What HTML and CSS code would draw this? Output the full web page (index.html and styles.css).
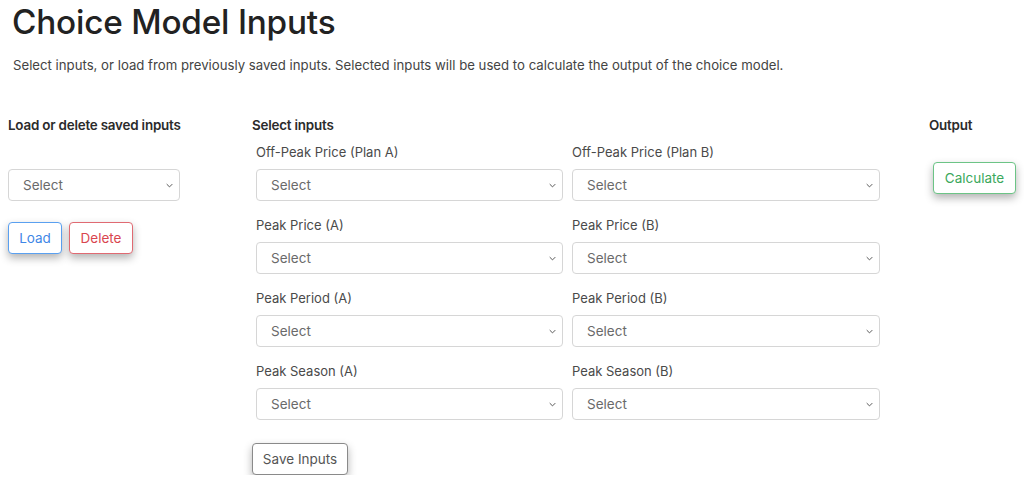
FILE: index.html
```html
<!DOCTYPE html>
<html>
<head>
<meta charset="utf-8">
<link rel="stylesheet" href="styles.css">
</head>
<body>
<h1 class="title">Choice Model Inputs</h1>
<p class="lead">Select inputs, or load from previously saved inputs. Selected inputs will be used to calculate the output of the choice model.</p>
<div class="layout">
  <section class="col-left">
    <h2 class="heading">Load or delete saved inputs</h2>
    <div class="select left-select"><span>Select</span><svg class="chev" viewBox="0 0 10 6"><path d="M1 1l4 4 4-4"/></svg></div>
    <div class="btn-row">
      <button class="btn btn-blue">Load</button>
      <button class="btn btn-red">Delete</button>
    </div>
  </section>
  <section class="col-mid">
    <h2 class="heading">Select inputs</h2>
    <div class="grid">
      <div class="field"><label>Off-Peak Price (Plan A)</label><div class="select"><span>Select</span><svg class="chev" viewBox="0 0 10 6"><path d="M1 1l4 4 4-4"/></svg></div></div>
      <div class="field"><label>Off-Peak Price (Plan B)</label><div class="select"><span>Select</span><svg class="chev" viewBox="0 0 10 6"><path d="M1 1l4 4 4-4"/></svg></div></div>
      <div class="field"><label>Peak Price (A)</label><div class="select"><span>Select</span><svg class="chev" viewBox="0 0 10 6"><path d="M1 1l4 4 4-4"/></svg></div></div>
      <div class="field"><label>Peak Price (B)</label><div class="select"><span>Select</span><svg class="chev" viewBox="0 0 10 6"><path d="M1 1l4 4 4-4"/></svg></div></div>
      <div class="field"><label>Peak Period (A)</label><div class="select"><span>Select</span><svg class="chev" viewBox="0 0 10 6"><path d="M1 1l4 4 4-4"/></svg></div></div>
      <div class="field"><label>Peak Period (B)</label><div class="select"><span>Select</span><svg class="chev" viewBox="0 0 10 6"><path d="M1 1l4 4 4-4"/></svg></div></div>
      <div class="field"><label>Peak Season (A)</label><div class="select"><span>Select</span><svg class="chev" viewBox="0 0 10 6"><path d="M1 1l4 4 4-4"/></svg></div></div>
      <div class="field"><label>Peak Season (B)</label><div class="select"><span>Select</span><svg class="chev" viewBox="0 0 10 6"><path d="M1 1l4 4 4-4"/></svg></div></div>
    </div>
    <button class="btn btn-grey save">Save Inputs</button>
  </section>
  <section class="col-right">
    <h2 class="heading">Output</h2>
    <button class="btn btn-green calc">Calculate</button>
  </section>
</div>
</body>
</html>
```
FILE: styles.css
```css
* { box-sizing: border-box; }
body {
  margin: 0;
  font-family: Inter, "Open Sans", sans-serif;
  color: #333;
  background: #fff;
}
.title {
  margin: 0;
  padding: 2px 0 0 12px;
  font-size: 33.3px;
  font-weight: 500;
  line-height: 40px;
  color: #222;
  letter-spacing: -0.2px;
}
.lead {
  margin: 14px 0 0 13px;
  font-size: 13.2px;
  line-height: 18px;
  color: #444;
}
.layout {
  display: flex;
  margin-top: 42px;
}
.heading {
  margin: 0;
  font-size: 13.4px;
  font-weight: 600;
  line-height: 18px;
  color: #2b2b2b;
  letter-spacing: -0.2px;
}
.col-left {
  width: 244px;
  padding-left: 8px;
}
.left-select {
  width: 172px;
  margin-top: 35px;
}
.btn-row {
  display: flex;
  gap: 7px;
  margin-top: 21px;
}
.col-mid {
  width: 685px;
  padding-left: 8px;
}
.grid {
  display: grid;
  grid-template-columns: 307px 308px;
  column-gap: 9px;
  row-gap: 15px;
  margin-left: 4px;
  margin-top: 9px;
}
.field label {
  display: block;
  font-size: 13px;
  line-height: 18px;
  color: #4a4a4a;
  margin-bottom: 8px;
}
.select {
  display: flex;
  align-items: center;
  justify-content: space-between;
  height: 32px;
  border: 1px solid #d6d6d6;
  border-radius: 4px;
  padding: 0 6px 0 14px;
  font-size: 13.5px;
  color: #6a6a6a;
  background: #fff;
}
.chev {
  width: 7px;
  height: 5px;
  fill: none;
  stroke: #555;
  stroke-width: 1.4;
}
.btn {
  font-family: inherit;
  font-size: 13.5px;
  background: #fff;
  border-radius: 4px;
  height: 32px;
  padding: 0 6px;
  border: 1.5px solid;
  white-space: nowrap;
  box-shadow: 0 4px 8px rgba(0, 0, 0, 0.3);
}
.btn-blue { border-color: #5aa0f0; color: #3f87e6; width: 54px; }
.btn-red { border-color: #e06a72; color: #d9454f; width: 64px; }
.btn-green { border-color: #6cc486; color: #3aa85c; }
.btn-grey { border-color: #8a8a8a; color: #555; }
.save {
  margin-top: 23px;
  width: 96px;
}
.col-right {
  padding-left: 0;
}
.calc {
  margin-top: 28px;
  margin-left: 4px;
  width: 83px;
}
```
